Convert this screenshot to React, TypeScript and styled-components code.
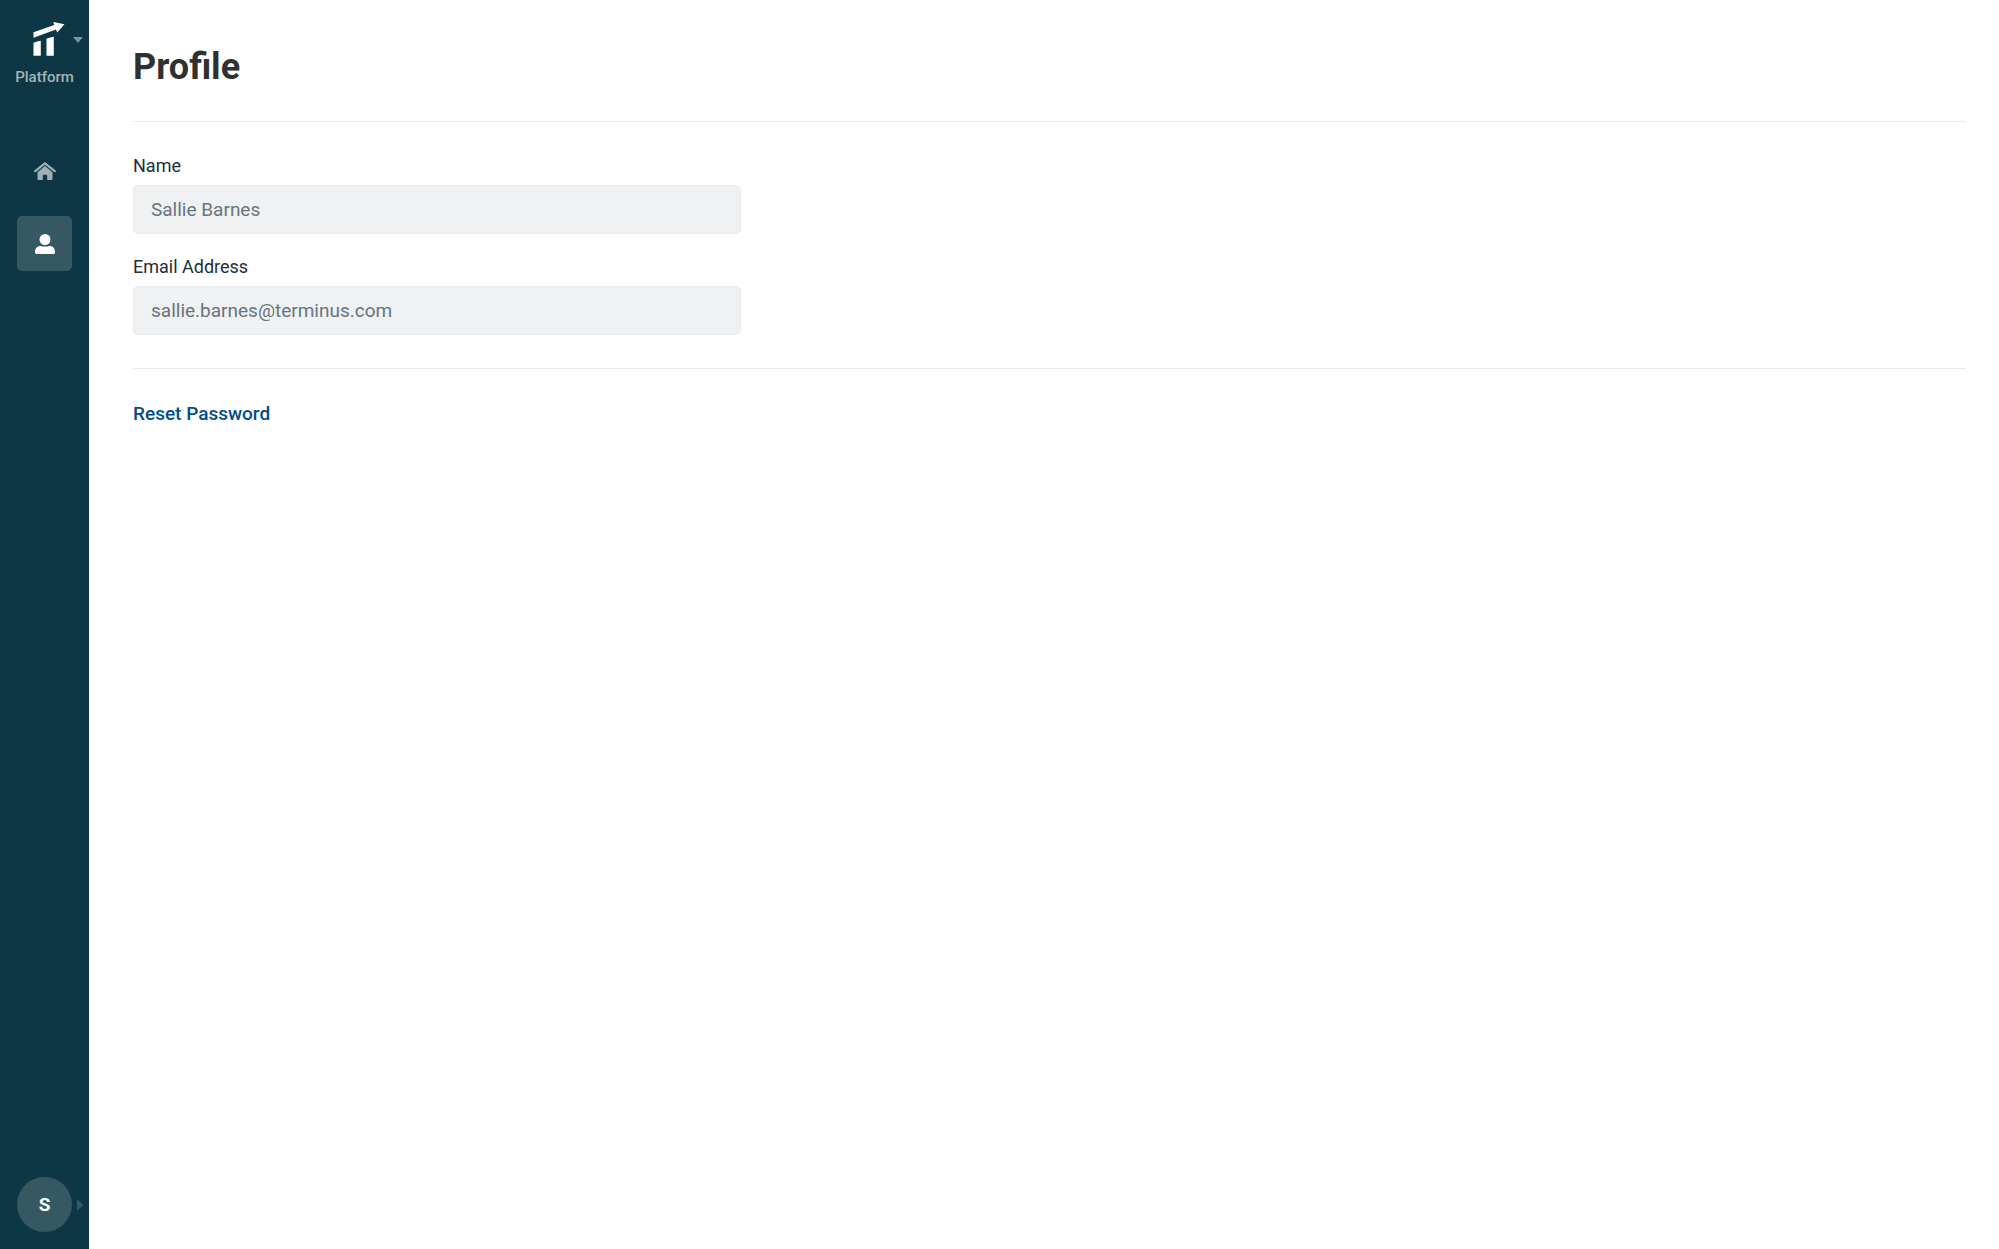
import React from "react";
import styled, { createGlobalStyle, css } from "styled-components";

const GlobalStyle = createGlobalStyle`
  *, *::before, *::after { box-sizing: border-box; }
  body {
    margin: 0;
    background: #ffffff;
    font-family: Roboto, "Liberation Sans", sans-serif;
    color: #222e38;
  }
`;

const Layout = styled.div`
  display: flex;
  min-height: 100vh;
`;

const Sidebar = styled.aside`
  display: flex;
  flex-direction: column;
  align-items: center;
  flex: none;
  width: 89px;
  padding: 17px 0;
  background: #0d3745;
`;

const resetButton = css`
  border: 0;
  padding: 0;
  background: none;
  font-family: inherit;
  cursor: pointer;
`;

const SwitcherButton = styled.button`
  ${resetButton}
  display: flex;
  flex-direction: column;
  align-items: center;
  gap: 6px;
  width: 100%;
  color: #a4b3b8;
  font-size: 15px;
  font-weight: 500;
  line-height: 20px;
`;

const SwitcherMark = styled.span`
  display: grid;
  grid-template-columns: 1fr 44px 1fr;
  align-items: center;
  width: 100%;

  svg { display: block; }
  .mark { grid-column: 2; }
`;

const Nav = styled.nav`
  display: flex;
  flex-direction: column;
  gap: 18px;
  margin-top: 56px;
`;

const NavItem = styled.a<{ $active?: boolean }>`
  display: grid;
  place-items: center;
  width: 55px;
  height: 55px;
  border-radius: 5px;
  color: ${({ $active }) => ($active ? "#ffffff" : "#9eafb5")};
  background: ${({ $active }) => ($active ? "#355863" : "transparent")};
`;

const AccountButton = styled.button`
  ${resetButton}
  display: grid;
  grid-template-columns: 1fr 55px 1fr;
  align-items: center;
  justify-items: center;
  width: 100%;
  margin-top: auto;
  color: #355863;

  svg { display: block; }
`;

const Avatar = styled.span`
  grid-column: 2;
  display: grid;
  place-items: center;
  width: 55px;
  height: 55px;
  border-radius: 50%;
  background: #355863;
  color: #ffffff;
  font-size: 19px;
  font-weight: 700;
`;

const Main = styled.main`
  flex: 1;
  min-width: 0;
  padding: 44px 33px 44px 44px;
`;

const Title = styled.h1`
  margin: 0;
  padding-bottom: 31px;
  border-bottom: 1px solid #e8eaeb;
  color: #2f3030;
  font-size: 36px;
  font-weight: 700;
  line-height: 46px;
`;

const Form = styled.form`
  display: flex;
  flex-direction: column;
  gap: 22px;
  padding: 33px 0;
  border-bottom: 1px solid #e8eaeb;
`;

const Field = styled.div`
  display: flex;
  flex-direction: column;
  gap: 8px;
  max-width: 608px;
`;

const Label = styled.label`
  color: #222e38;
  font-size: 18px;
  line-height: 22px;
`;

const Input = styled.input`
  width: 100%;
  height: 49px;
  padding: 0 17px;
  border: 1px solid #e8eaeb;
  border-radius: 5px;
  background: #f0f1f3;
  color: #66757d;
  font-family: inherit;
  font-size: 19px;
`;

const ResetLink = styled.a`
  display: inline-block;
  margin-top: 33px;
  color: #004d88;
  font-size: 19px;
  font-weight: 500;
  line-height: 24px;
  text-decoration: none;
`;

const LogoMark = () => (
  <svg className="mark" width="44" height="44" viewBox="0 0 44 44" fill="#ffffff" aria-hidden="true">
    <path d="M10.500 15.200 L31.200 8 L30.300 5 L41.500 7.200 L34.200 15.500 L33 12.500 L10.500 20.800 Z" />
    <path d="M10.500 25.800 Q14 24 17.800 23.700 V38.800 H10.500 Z" />
    <path d="M23.500 21.800 Q27 20.500 30.800 19.800 V38.800 H23.500 Z" />
  </svg>
);

const HomeIcon = () => (
  <svg width="22" height="18" viewBox="0 0 22 18" fill="currentColor" aria-hidden="true">
    <path d="M1.200 9.200 L11 1.300 L20.800 9.200" fill="none" stroke="currentColor" strokeWidth="2.200" strokeLinecap="round" strokeLinejoin="round" />
    <path d="M11 4 L18.500 10.200 V17 Q18.500 18 17.500 18 H13.200 V13.500 Q13.200 12.700 12.400 12.700 H9.600 Q8.800 12.700 8.800 13.500 V18 H4.500 Q3.500 18 3.500 17 V10.200 Z" />
  </svg>
);

const UserIcon = () => (
  <svg width="20" height="20" viewBox="0 0 20 20" fill="currentColor" aria-hidden="true">
    <circle cx="10" cy="5.500" r="5.500" />
    <path d="M0 18 C0 14 2.500 12 5.500 12 C7 12.800 13 12.800 14.500 12 C17.500 12 20 14 20 18 Q20 20 18.500 20 H1.500 Q0 20 0 18 Z" />
  </svg>
);

const App = () => (
  <>
    <GlobalStyle />
    <Layout>
      <Sidebar>
        <SwitcherButton type="button" aria-haspopup="menu">
          <SwitcherMark>
            <LogoMark />
            <svg width="22" height="8" viewBox="0 0 22 8" fill="#7d939b" aria-hidden="true">
              <path d="M6 2 H16 L11 8 Z" />
            </svg>
          </SwitcherMark>
          Platform
        </SwitcherButton>
        <Nav aria-label="Main">
          <NavItem href="#home" aria-label="Home"><HomeIcon /></NavItem>
          <NavItem href="#profile" aria-label="Profile" aria-current="page" $active><UserIcon /></NavItem>
        </Nav>
        <AccountButton type="button" aria-haspopup="menu">
          <Avatar>S</Avatar>
          <svg width="8" height="12" viewBox="0 0 8 12" fill="currentColor" aria-hidden="true">
            <path d="M0 0 L6.500 6 L0 12 Z" />
          </svg>
        </AccountButton>
      </Sidebar>
      <Main>
        <Title>Profile</Title>
        <Form>
          <Field>
            <Label htmlFor="name">Name</Label>
            <Input id="name" type="text" defaultValue="Sallie Barnes" disabled />
          </Field>
          <Field>
            <Label htmlFor="email">Email Address</Label>
            <Input id="email" type="email" defaultValue="sallie.barnes@terminus.com" disabled />
          </Field>
        </Form>
        <ResetLink href="#reset-password">Reset Password</ResetLink>
      </Main>
    </Layout>
  </>
);

export default App;
